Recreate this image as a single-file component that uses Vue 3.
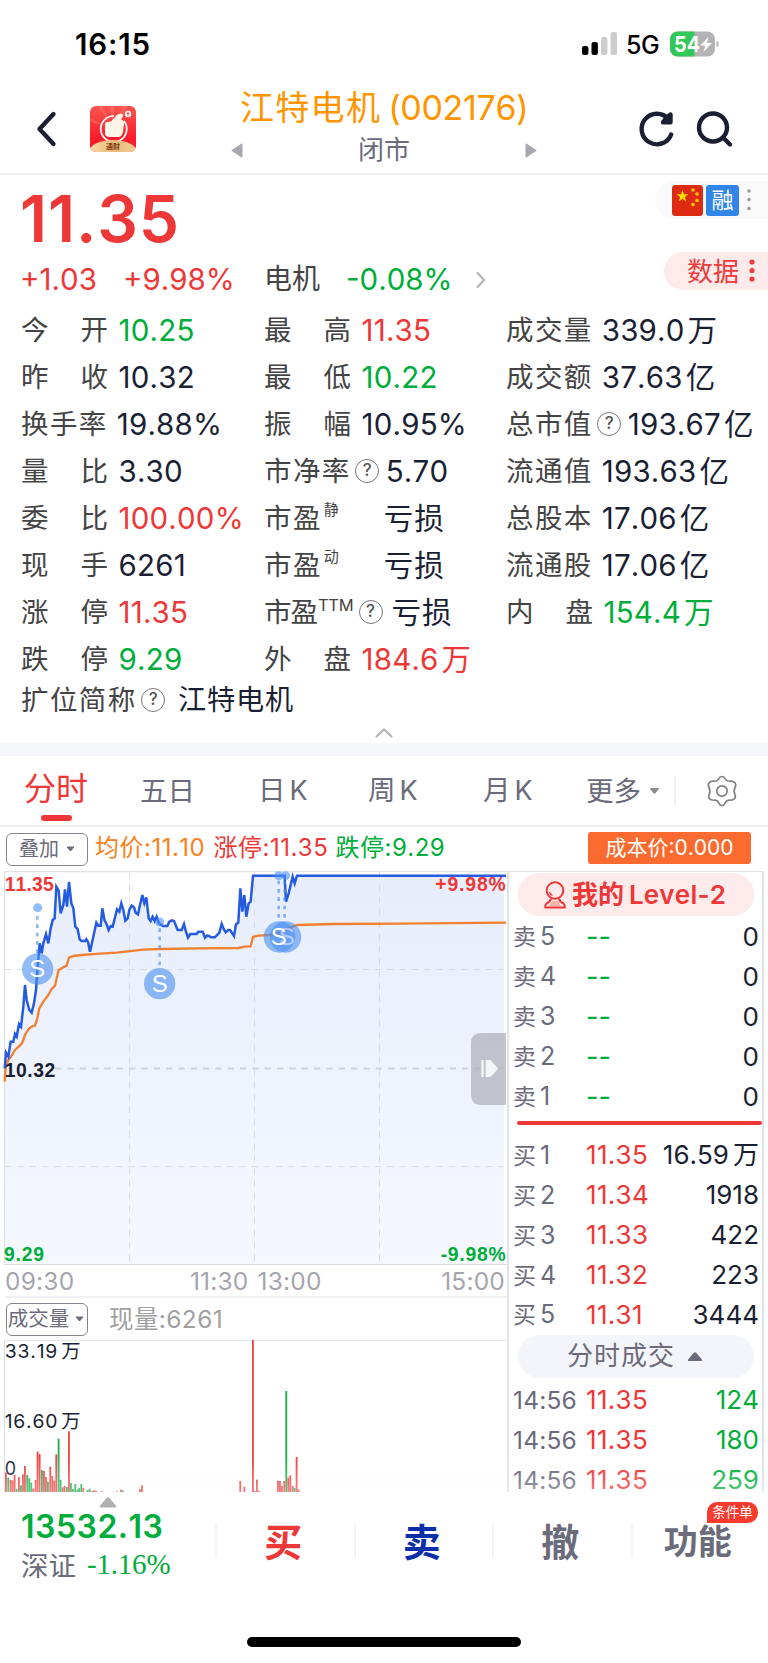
<script setup>
const cols = [
  [
    { l: '今开', v: '10.25', c: 'green' },
    { l: '昨收', v: '10.32' },
    { l: '换手率', v: '19.88%' },
    { l: '量比', v: '3.30' },
    { l: '委比', v: '100.00%', c: 'red' },
    { l: '现手', v: '6261' },
    { l: '涨停', v: '11.35', c: 'red' },
    { l: '跌停', v: '9.29', c: 'green' }
  ],
  [
    { l: '最高', v: '11.35', c: 'red' },
    { l: '最低', v: '10.22', c: 'green' },
    { l: '振幅', v: '10.95%' },
    { l: '市净率', help: true, v: '5.70' },
    { l: '市盈', sup: '静', v: '', u: '亏损' },
    { l: '市盈', sup: '动', v: '', u: '亏损' },
    { l: '市盈', sup: 'TTM', help: true, v: '', u: '亏损' },
    { l: '外盘', v: '184.6', u: '万', c: 'red' }
  ],
  [
    { l: '成交量', v: '339.0', u: '万' },
    { l: '成交额', v: '37.63', u: '亿' },
    { l: '总市值', help: true, v: '193.67', u: '亿' },
    { l: '流通值', v: '193.63', u: '亿' },
    { l: '总股本', v: '17.06', u: '亿' },
    { l: '流通股', v: '17.06', u: '亿' },
    { l: '内盘', v: '154.4', u: '万', c: 'green' }
  ]
]
const sells = [5, 4, 3, 2, 1]
const buys = [
  { n: 1, p: '11.35', v: '16.59', u: '万' },
  { n: 2, p: '11.34', v: '1918' },
  { n: 3, p: '11.33', v: '422' },
  { n: 4, p: '11.32', v: '223' },
  { n: 5, p: '11.31', v: '3444' }
]
const trades = ['124', '180', '259']

const price =
  '14,625 18,578 25,590 32,545 40,545 45,522 50,530 57,492 63,500 70,440 75,375 80,420 88,450 95,458 102,430 108,390 113,320 119,250 125,280 130,250 138,222 145,250 152,205 158,180 164,175 169,80 176,92 182,160 190,135 195,88 201,140 207,66 214,130 220,145 226,200 233,207 239,238 245,243 256,243 259,238 264,245 270,275 280,230 289,188 295,197 302,197 307,145 314,183 319,190 326,210 332,198 338,200 351,148 358,155 364,130 370,150 376,182 383,175 388,150 395,137 402,142 407,158 414,163 420,135 427,105 433,130 439,112 446,175 452,183 458,170 464,183 470,170 477,190 489,198 502,198 508,185 516,181 522,183 533,210 545,210 552,192 557,212 564,233 571,222 590,222 595,215 608,215 615,233 621,227 627,228 633,232 645,232 658,218 665,192 671,207 677,217 684,210 690,210 702,228 708,193 715,188 721,85 727,155 733,105 739,170 746,130 752,125 759,47 854,47 858,125 866,100 878,50 884,70 891,47 1518,47'
const average =
  '14,665 17,620 25,600 36,585 45,570 56,560 66,550 75,525 85,508 95,500 105,497 112,475 118,445 130,425 145,405 155,387 165,377 170,355 176,330 188,323 200,317 207,293 220,288 245,285 300,281 350,278 430,269 480,267 600,265 715,264 735,260 752,259 759,231 775,227 810,225 850,215 866,205 890,195 1000,192 1200,191 1518,188'

// [x, height, direction]
const bars = [
  [18, 58, 1], [25, 43, 0], [32, 36, 1], [38, 35, 1], [44, 51, 1], [50, 9, 0], [57, 45, 1], [63, 20, 0],
  [69, 53, 1], [75, 78, 1], [82, 51, 0], [88, 41, 0], [94, 28, 0], [100, 11, 1], [107, 36, 1], [113, 121, 1],
  [119, 114, 1], [126, 66, 0], [132, 63, 1], [138, 45, 1], [144, 31, 0], [151, 76, 1], [157, 48, 1], [163, 34, 1],
  [169, 113, 1], [176, 160, 0], [182, 37, 0], [188, 14, 1], [194, 18, 1], [201, 15, 0], [207, 182, 1], [213, 27, 0],
  [219, 9, 0], [226, 24, 0], [232, 7, 0], [238, 12, 0], [244, 24, 0], [250, 12, 1], [263, 6, 0], [269, 10, 0],
  [276, 3, 1], [282, 5, 1], [288, 4, 1], [307, 3, 1], [351, 2, 1], [363, 7, 1], [369, 5, 0], [420, 9, 1],
  [426, 20, 1], [721, 33, 1], [733, 16, 1], [759, 456, 1], [765, 3, 1], [771, 37, 1], [777, 3, 1], [834, 34, 1],
  [840, 33, 1], [846, 18, 1], [853, 33, 1], [859, 303, 0], [865, 43, 1], [871, 50, 1], [878, 18, 1], [884, 12, 0],
  [890, 105, 1], [896, 8, 1]
]
</script>

<template>
  <div class="screen">
    <div class="status">
      <span class="time">16:15</span>
      <svg class="sig" width="35" height="23" viewBox="0 0 35 23">
        <rect x="0" y="14" width="6.4" height="9" rx="2" />
        <rect x="9.5" y="10" width="6.4" height="13" rx="2" />
        <rect x="19" y="5" width="6.4" height="18" rx="2" fill="#ccc" />
        <rect x="28.6" y="0" width="6.4" height="23" rx="2" fill="#ccc" />
      </svg>
      <span class="net">5G</span>
      <svg width="50" height="26" viewBox="0 0 50 26">
        <defs><clipPath id="bat"><rect x="0" y=".5" width="45" height="25" rx="7.5" /></clipPath></defs>
        <g clip-path="url(#bat)">
          <rect width="45" height="26" fill="#b3b3b5" />
          <rect width="24.5" height="26" fill="#34c759" />
        </g>
        <path d="M46.5 9.5q2.3.8 2.3 3.5t-2.3 3.5z" fill="#b3b3b5" />
        <text x="4" y="20.800" class="batt" textLength="26" lengthAdjust="spacingAndGlyphs">54</text>
        <path d="M39 4.5 29.5 15h5.3l-2.5 7.5L43 11.5h-5.4z" fill="#fff" stroke="#b3b3b5" stroke-width="1" />
      </svg>
    </div>

    <header class="head">
      <svg class="back" width="22" height="38" viewBox="0 0 22 38"><path d="M17.5 4 3.5 19 17.5 34" class="ink" /></svg>
      <svg class="logo" width="46" height="46" viewBox="0 0 46 46">
        <defs>
          <linearGradient id="lg" x1="0" y1="0" x2="0" y2="1"><stop offset="0" stop-color="#fb5550" /><stop offset=".7" stop-color="#fb1c2b" /></linearGradient>
          <linearGradient id="gold" x1="0" y1="0" x2="1" y2="0"><stop offset="0" stop-color="#fbdca6" /><stop offset=".5" stop-color="#e9b978" /><stop offset="1" stop-color="#f6cf94" /></linearGradient>
          <clipPath id="lc"><rect width="46" height="46" rx="6" /></clipPath>
        </defs>
        <g clip-path="url(#lc)">
          <rect width="46" height="46" fill="url(#lg)" />
          <path d="M23 22 8 0h4zM23 22 20 0h4zM23 22 0 12v4zM23 22 33 0h4z" fill="#fff" opacity=".12" />
          <path d="M24 10A13 13 0 1 0 34 15" fill="none" stroke="#fff" stroke-width="1.7" />
          <path d="M15 18q0-2 2-2l4-.5 4.500-5q2-3.500 7-2.500 1.500.5.5 2l-2 3.500q3 .5 3 3.500l-1 9q-1 5-5 5h-8.500q-4.500 0-4.500-4z" fill="#fff4e8" />
          <circle cx="38" cy="8" r="3.2" fill="#fff" /><path d="M38 6v4M36.500 7.500h3" stroke="#fb3b3b" stroke-width=".9" />
          <ellipse cx="23" cy="46" rx="24" ry="12" fill="url(#gold)" />
          <text x="16" y="43" font-size="7" font-weight="700" fill="#7c3a10" textLength="14">通财</text>
        </g>
      </svg>
      <div class="title">
        <div class="t1"><span class="tcn">江特电机</span><span class="tnum">(002176)</span></div>
        <div class="t2">
          <svg width="12" height="15" viewBox="0 0 12 15"><path d="M11 .8v13.400L.8 7.500z" class="tri" /></svg>
          <span>闭市</span>
          <svg width="12" height="15" viewBox="0 0 12 15"><path d="M1 .8v13.400L11.200 7.500z" class="tri" /></svg>
        </div>
      </div>
      <svg class="ref" width="36" height="38" viewBox="0 0 36 38">
        <path d="M32.200 24.500A15.300 15.300 0 1 1 29.500 9" class="ink" />
        <path d="M31.500 4.500v7.700h-7.500l3-4z" class="ink arrow" />
      </svg>
      <svg class="srch" width="36" height="38" viewBox="0 0 36 38">
        <circle cx="17" cy="17.500" r="14" class="ink" /><path d="M27.500 28 34 34.500" class="ink" />
      </svg>
    </header>

    <section class="quote">
      <div class="qrow">
        <div class="big">11.35</div>
        <div class="tags">
          <svg width="31" height="31" viewBox="0 0 31 31">
            <rect width="31" height="31" rx="3.500" fill="#de2a10" />
            <path d="M10.500 5l1.500 4.300h4.400l-3.500 2.700 1.300 4.400-3.700-2.600-3.700 2.600 1.300-4.400L4.600 9.300H9z" fill="#ffde00" />
            <g fill="#ffc800"><circle cx="21" cy="5" r="1.800" /><circle cx="25" cy="9" r="1.800" /><circle cx="25" cy="15.500" r="1.800" /><circle cx="21" cy="19.500" r="1.800" /></g>
          </svg>
          <span class="rong">融</span>
          <svg width="4" height="22" viewBox="0 0 4 22"><g fill="#999"><circle cx="2" cy="2" r="1.700" /><circle cx="2" cy="10.500" r="1.700" /><circle cx="2" cy="19.500" r="1.700" /></g></svg>
        </div>
      </div>
      <div class="chg">
        <span class="red c1">+1.03</span><span class="red c2">+9.98%</span>
        <span class="c3">电机</span><span class="green c4">-0.08%</span>
        <svg width="10" height="18" viewBox="0 0 10 18"><path d="M1.500 2 8 9l-6.500 7" class="chev" /></svg>
        <div class="data"><span>数据</span>
          <svg width="6" height="24" viewBox="0 0 6 24"><g fill="#ee3b3b"><circle cx="3" cy="3" r="2.600" /><circle cx="3" cy="11.500" r="2.600" /><circle cx="3" cy="20" r="2.600" /></g></svg>
        </div>
      </div>
      <div class="grid">
        <div v-for="(col, i) in cols" :key="i" class="col">
          <div v-for="(r, j) in col" :key="j" class="cell">
            <span class="lab" :class="{ wide: r.l.length === 2 && !r.sup, supl: r.sup, ttm: r.sup === 'TTM' }">
              <span v-for="ch in r.l" :key="ch">{{ ch }}</span>
            </span>
            <sup v-if="r.sup" :class="{ ttm: r.sup === 'TTM' }">{{ r.sup }}</sup>
            <i v-if="r.help" class="help">?</i>
            <span class="val" :class="[r.c, { afterhelp: r.help, aftersup: r.sup && !r.help }]">{{ r.v }}<b v-if="r.u" :class="{ solo: !r.v }">{{ r.u }}</b></span>
          </div>
        </div>
      </div>
      <div class="ext"><span class="lab">扩位简称</span><i class="help">?</i><span class="extv">江特电机</span></div>
      <div class="fold"><svg width="18" height="11" viewBox="0 0 18 11"><path d="M1.500 9.500 9 2.500l7.500 7" class="chev" /></svg></div>
    </section>

    <div class="band"></div>

    <nav class="tabs">
      <span class="tab on">分时</span>
      <span class="tab wd">五日</span>
      <span class="tab">日<em>K</em></span>
      <span class="tab">周<em>K</em></span>
      <span class="tab">月<em>K</em></span>
      <span class="tab more wd">更多</span>
      <svg class="caret" width="11" height="8" viewBox="0 0 11 8"><path d="M2 1h7q1.500 0 .6 1.200L6.400 6.300q-.9 1-1.800 0L1.400 2.200Q.5 1 2 1" fill="#8c8c8c" /></svg>
      <i class="vline"></i>
      <svg class="gear" width="32" height="32" viewBox="0 0 32 32" fill="none" stroke="#808080" stroke-width="1.700">
        <path d="M16 1.500q2.300 0 3.300 2.300 1.500 2.700 4.700 2.400 3.300-.4 4.900 1.500 1.600 2.400.2 4.400-1.900 3.900-.2 7.400 1.200 2.500-.6 4.300-1.400 1.700-4.300 1.400-3.200-.3-4.700 2.600Q18 30.500 16 30.500t-3.300-2.700q-1.500-2.900-4.700-2.600-2.900.3-4.300-1.400-1.800-1.800-.6-4.300 1.700-3.500-.2-7.400-1.400-2 .2-4.400Q4.700 5.800 8 6.200q3.200.3 4.700-2.400 1-2.300 3.300-2.300z" stroke-linejoin="round" />
        <circle cx="16" cy="16" r="5.200" />
      </svg>
    </nav>

    <div class="info">
      <span class="box">叠加<svg width="9" height="7" viewBox="0 0 9 7"><path d="M1 1h7L4.500 5z" fill="#6b6b7b" stroke="#6b6b7b" stroke-linejoin="round" /></svg></span>
      <span class="it orange">均价:11.10</span><span class="it red">涨停:11.35</span><span class="it green">跌停:9.29</span>
      <span class="cost">成本价:0.000</span>
    </div>

    <main class="body">
      <div class="left">
        <svg class="chart" width="508" height="394" viewBox="0 33 1524 1182">
          <defs><linearGradient id="area" x1="0" y1="0" x2="0" y2="1"><stop offset="0" stop-color="#e7edfb" /><stop offset="1" stop-color="#f5f8ff" /></linearGradient></defs>
          <polygon :points="price.replace('1518,47', '1512,47') + ' 1512,1212 14,1212'" fill="url(#area)" />
          <g stroke="#d3d8e0" stroke-width="2.600" stroke-dasharray="20 17">
            <path d="M388.500 36V1212M763.500 36V1212M1138.500 36V1212M14 328.500H1510M14 920H1510" fill="none" />
          </g>
          <path d="M165 625.500H1510" stroke="#cdd3dc" stroke-width="6" stroke-dasharray="19 18" />
          <path d="M13.500 1215V35H1521M13.500 1213.500H1521" fill="none" stroke="#d8dee3" stroke-width="3" />
          <polyline :points="average" fill="none" stroke="#f28030" stroke-width="7" stroke-linejoin="round" />
          <polyline :points="price" fill="none" stroke="#245be0" stroke-width="7.500" stroke-linejoin="miter" />
          <g stroke="#4a90ee" stroke-opacity=".62" stroke-width="8" stroke-dasharray="11 14">
            <path d="M112 168V280M479 205V325M836 62V185M854 62V185" />
          </g>
          <g fill="#4a90f2" fill-opacity=".6">
            <circle cx="113" cy="143" r="13.500" /><circle cx="479" cy="186" r="13.500" /><circle cx="836" cy="47" r="13.500" /><circle cx="857" cy="47" r="13.500" />
            <circle cx="113" cy="327" r="47" /><circle cx="479" cy="371" r="47" /><circle cx="838" cy="231" r="47" /><circle cx="857" cy="231" r="47" />
          </g>
          <g class="mark"><text x="112" y="352">S</text><text x="479" y="397">S</text><text x="860" y="256" opacity=".5">S</text><text x="836" y="256">S</text></g>
          <g class="lim">
            <text x="14" y="93" fill="#ee3737" textLength="147">11.35</text>
            <text x="14" y="651" fill="#1b1f33" textLength="152">10.32</text>
            <text x="12" y="1204" fill="#00ad3a" textLength="120">9.29</text>
            <text x="1306" y="93" fill="#ee3737" textLength="211">+9.98%</text>
            <text x="1322" y="1204" fill="#00ad3a" textLength="195">-9.98%</text>
          </g>
          <path d="M1518 519h-75q-30 0-30 30v156q0 30 30 30h75z" fill="#aeb0b8" fill-opacity=".72" />
          <path d="M1444 600h7v51h-7zM1457 600h14l20 22q5 4 0 8l-20 21h-14z" fill="#f4f5f8" />
        </svg>
        <div class="axis"><span>09:30</span><span class="mid">11:30<i></i>13:00</span><span>15:00</span></div>
        <div class="volh"><span class="box vb">成交量<svg width="9" height="7" viewBox="0 0 9 7"><path d="M1 1h7L4.500 5z" fill="#6b6b7b" stroke="#6b6b7b" stroke-linejoin="round" /></svg></span><span class="now">现量:6261</span></div>
        <svg class="vol" width="508" height="152" viewBox="0 297 1524 456">
          <path d="M13.500 297V753" stroke="#d8dee3" stroke-width="3" />
          <path d="M13 298.500H1518" stroke="#e4e7ea" stroke-width="3" />
          <rect v-for="(b, k) in bars" :key="k" :x="b[0] - 3" :y="753 - b[1]" width="5.600" :height="b[1]" :fill="b[2] ? '#ee4646' : '#1cb04c'" />
          <g class="vt">
            <text x="14" y="351" textLength="158">33.19</text><text x="184" y="351" font-size="58">万</text>
            <text x="14" y="561" textLength="158">16.60</text><text x="184" y="561" font-size="58">万</text>
            <text x="14" y="702" textLength="34" lengthAdjust="spacingAndGlyphs">0</text>
          </g>
        </svg>
      </div>

      <div class="right">
        <div class="lv">
          <svg width="22" height="28" viewBox="0 0 22 28" fill="none" stroke="#ee3737" stroke-width="2"><circle cx="11" cy="9.500" r="8.300" /><path d="M7 17.500q-.5 3-4.500 5-1.300 1-1.300 4h19.600q0-3-1.300-4-4-2-4.500-5" stroke-linejoin="round" /><path d="M8 20h6l3 5H5z" fill="#f8b5a5" stroke="none" /><path d="M5.500 11q.7 2.500 3 3.500" stroke-width="1.300" /></svg>
          <span>我的<u>Level-2</u></span>
        </div>
        <div class="book">
          <div v-for="n in sells" :key="n" class="ln"><span class="bl">卖<em>{{ n }}</em></span><span class="bp green dash">--</span><span class="bv">0</span></div>
        </div>
        <div class="bar"></div>
        <div class="book">
          <div v-for="b in buys" :key="b.n" class="ln"><span class="bl">买<em>{{ b.n }}</em></span><span class="bp red">{{ b.p }}</span><span class="bv">{{ b.v }}<b v-if="b.u">{{ b.u }}</b></span></div>
        </div>
        <div class="deal">分时成交<svg width="16" height="11" viewBox="0 0 16 11"><path d="M2 10Q0 10 1.500 8L6.600 2Q8 .4 9.400 2l5.100 6Q16 10 14 10z" fill="#6b6b7b" /></svg></div>
        <div class="book last">
          <div v-for="t in trades" :key="t" class="ln"><span class="bl tm">14:56</span><span class="bp red">11.35</span><span class="bv green">{{ t }}</span></div>
        </div>
      </div>
      <div class="fade"></div>
    </main>

    <footer class="foot">
      <div class="idx">
        <svg width="18" height="12" viewBox="0 0 18 12"><path d="M1.500 11.500Q0 11 1.500 9L7.500 2Q9 .5 10.500 2l6 7q1.500 2 0 2.500z" fill="#b0b0b0" /></svg>
        <div class="iv">13532.13</div>
        <div class="in"><span>深证</span><span class="ip">-1.16%</span></div>
      </div>
      <div class="act buy">买</div>
      <div class="act sell">卖</div>
      <div class="act">撤</div>
      <div class="act fn">功能<span class="badge">条件单</span></div>
    </footer>
    <div class="home"></div>
  </div>
</template>

<style>
html, body { margin: 0; background: #fff; }
</style>

<style scoped>
.screen { width: 768px; height: 1663px; overflow: hidden; background: #fff; font-family: Inter, "Noto Sans CJK SC", sans-serif; font-kerning: none; color: #1b1f33; }
svg { display: block; flex: none; overflow: visible; }
i, em { font-style: normal; }
u { text-decoration: none; }
b { font-weight: inherit; }
.red { color: #ee3737; }
.green { color: #00ad3a; }
.orange { color: #fb8020; }
.ink { fill: none; stroke: #1b1f33; stroke-width: 4.4; stroke-linecap: round; stroke-linejoin: round; }
.ink.arrow { fill: #1b1f33; }
.tri { fill: #a8a9b0; stroke: #a8a9b0; stroke-linejoin: round; }
.chev { fill: none; stroke: #b5b5b5; stroke-width: 2.2; stroke-linecap: round; }

.status { height: 88px; display: flex; box-sizing: border-box; padding: 0 48px 0 75px; align-items: center; color: #000; }
.time { font-size: 29.5px; font-weight: 600; flex: 1; line-height: 30px; letter-spacing: 0.8px; }
.sig { margin-top: -1px; }
.net { font-size: 25px; font-weight: 500; margin: 2px 10px 0 9px; width: 34px; letter-spacing: -0.5px; }
.batt { font-family: Inter, sans-serif; font-size: 22px; font-weight: 700; fill: #fff; }

.head { height: 87px; border-bottom: 2px solid #f2f2f3; display: flex; box-sizing: border-box; padding-left: 36px; }
.back { margin-top: 22px; }
.logo { margin: 18px 0 0 32px; }
.title { width: 320px; margin-left: 87px; }
.t1 { height: 40px; line-height: 40px; color: #ff9500; display: flex; padding-left: 17px; }
.tcn { font-size: 34px; letter-spacing: 1.3px; }
.tnum { font-size: 34px; margin-left: 7px; white-space: nowrap; letter-spacing: -0.3px; }
.t2 { display: flex; align-items: center; justify-content: space-between; height: 44px; font-size: 26px; color: #6b6b7b; padding: 0 6px 0 8px; line-height: 40px; }
.t2 span { margin-top: 0; }
.ref { margin: 22px 0 0 96px; }
.srch { margin: 22px 0 0 21px; }

.quote { height: 568px; }
.qrow { display: flex; height: 72px; justify-content: space-between; }
.big { font-size: 64px; font-weight: 600; line-height: 88px; color: #ee3737; padding-left: 20px; letter-spacing: 0.9px; }
.tags { width: 113px; height: 38px; margin-top: 6px; border-radius: 19px 0 0 19px; background: #f9f9fa; display: flex; align-items: center; padding-left: 17px; box-sizing: border-box; }
.rong { width: 33px; height: 31px; line-height: 30px; background: #3285e8; color: #fff; font-size: 22px; border-radius: 3px; text-align: center; margin: 0 8px 0 3px; }
.chg { display: flex; height: 66px; align-items: center; font-size: 29.5px; padding-left: 20px; line-height: 34px; }
.chg > span { margin-top: -2px; }
.c1 { width: 103px; }
.c2 { width: 141px; }
.c3 { width: 82px; font-size: 28px; color: #444; }
.c4 { width: 130px; }
.data { margin-left: auto; width: 104px; height: 38px; border-radius: 19px 0 0 19px; background: #fdeaea; color: #ee3b3b; font-size: 26px; display: flex; align-items: center; box-sizing: border-box; padding-left: 23px; gap: 10px; margin-top: -18px; }
.data span { padding-top: 1px; }

.grid { display: grid; grid-template-columns: 243px 242px 262px; padding-left: 21px; margin-top: -7px; }
.cell { height: 47.1px; display: flex; align-items: center; white-space: nowrap; }
.lab { font-size: 27.5px; color: #444; letter-spacing: 1.4px; line-height: 36px; flex: none; }
.wide { width: 87px; display: flex; justify-content: space-between; letter-spacing: 0; }
.lab + .val { margin-left: 9px; }
.wide + .val { margin-left: 10.5px; }
.lab.ttm { letter-spacing: -1px; }
.supl + sup { font-size: 15px; line-height: 16px; color: #444; align-self: flex-start; margin: 8px 0 0 2px; width: 17px; }
.supl + sup.ttm { font-size: 16.500px; letter-spacing: -0.3px; width: 36px; margin-left: 1px; }
.help { box-sizing: border-box; width: 24px; height: 24px; border: 1.4px solid #777; border-radius: 50%; font-size: 17px; line-height: 21px; text-align: center; color: #555; flex: none; margin-left: 4.5px; font-weight: 500; }
.val { font-size: 29.5px; line-height: 36px; letter-spacing: 0.2px; }
.val b { font-size: 29.5px; margin-left: 3px; }
.val b.solo { margin-left: 0; letter-spacing: 1px; }
.afterhelp { margin-left: 6.5px; }
sup.ttm ~ .afterhelp { margin-left: 9px; }
.val.aftersup { margin-left: 43px; }
.ext { height: 34px; display: flex; align-items: center; padding-left: 21px; margin-top: 0; }
.extv { font-size: 28.2px; margin-left: 13px; letter-spacing: 0.8px; line-height: 34px; }
.fold { display: flex; justify-content: center; margin-top: 10px; }

.band { height: 13px; background: #f4f6fa; }
.tabs { height: 71px; border-bottom: 2px solid #eeeeef; box-sizing: border-box; display: flex; align-items: center; color: #6b6b7b; font-size: 27.5px; padding-left: 25px; position: relative; }
.tab { line-height: 36px; white-space: nowrap; }
.tab em { margin-left: 4px; font-size: 27px; }
.on { color: #ee3737; font-size: 32px; width: 115px; height: 69px; line-height: 66px; position: relative; text-indent: -1px; }
.on::after { content: ""; position: absolute; left: 16px; bottom: 4px; width: 31px; height: 6px; border-radius: 3px; background: #ee3737; }
.tab.wd { width: 118px; }
.tab.wd + .tab { width: 110px; }
.tab:nth-child(4) { width: 115px; }
.tab:nth-child(5) { width: 103px; }
.tab.more { width: 63px; }
.vline { width: 2px; height: 29px; background: #eee; margin: 0 30px 0 14px; }

.info { height: 44px; display: flex; align-items: center; padding: 0 0 0 6px; white-space: nowrap; font-size: 24px; line-height: 32px; }
.box { width: 82px; height: 33px; box-sizing: border-box; border: 1.6px solid #858592; border-radius: 6px; font-size: 20px; color: #6b6b7b; display: flex; align-items: center; justify-content: center; gap: 7px; line-height: 30px; }
.info .box { margin-right: 7px; }
.it { width: 118.500px; margin-top: -2px; letter-spacing: 0.5px; }
.it + .it { width: 122px; }
.it + .it + .it { width: auto; }
.cost { margin: -3px 17px 0 auto; width: 163px; height: 32px; line-height: 32px; border-radius: 3px; background: #fb6a2e; color: #fff; text-align: center; font-size: 21px; }

.body { height: 621px; display: flex; position: relative; overflow: hidden; }
.left { width: 507px; flex: none; }
.axis { height: 33px; border-bottom: 2px solid #f0f0f2; margin-left: 5px; display: flex; justify-content: space-between; line-height: 32px; font-size: 24.5px; letter-spacing: 0.2px; color: #a5a5ad; padding-right: 2px; box-sizing: border-box; }
.mid { margin-left: -4px; }
.mid i { display: inline-block; width: 9px; }
.volh { height: 42px; display: flex; align-items: center; padding-left: 6px; }
.vb { gap: 6px; padding-right: 2px; font-size: 20.5px; }
.now { font-size: 24.5px; color: #a0a0a0; margin-left: 21px; letter-spacing: 0.4px; line-height: 32px; margin-top: 0; }
.chart text { font-family: "Liberation Sans", Arial, sans-serif; }
.lim { font-weight: 700; font-size: 58px; }
.mark { fill: #fff; font-size: 72px; text-anchor: middle; }
.vt { font-size: 58px; fill: #1b1f33; font-family: Inter, "Noto Sans CJK SC", sans-serif; }

.right { width: 257px; box-sizing: border-box; border: 2px solid #dfe3e6; border-top-width: 1px; border-bottom: 0; padding: 0 0 0 3px; }
.lv { width: 236px; height: 43px; margin: 1px 0 1px 6px; border-radius: 22px; background: #fdeaea; color: #ee3737; display: flex; align-items: center; justify-content: center; gap: 6px; font-size: 26px; font-weight: 700; line-height: 40px; padding-right: 2px; box-sizing: border-box; }
.lv span { margin-top: 1px; }
.lv u { margin-left: 5px; font-weight: 600; letter-spacing: 0.2px; }
.ln { height: 39.9px; display: flex; align-items: center; font-size: 26px; line-height: 36px; }
.bl { width: 73px; color: #6b6b7b; font-size: 23px; margin-left: 1px; }
.bl em { font-size: 25px; margin-left: 4px; }
.bl.tm { font-size: 24.5px; white-space: nowrap; letter-spacing: 0.2px; }
.bp { letter-spacing: 0.3px; }
.last .ln { line-height: 28px; }
.dash { letter-spacing: 0; font-size: 27px; }
.bv { margin-left: auto; padding-right: 3px; }
.bv b { font-size: 26px; margin-left: 4px; }
.bar { width: 245px; height: 4px; border-radius: 2px; background: #ee3737; margin: 5px 0 10px 5px; }
.deal { width: 236px; height: 43px; margin: 0 0 2px 6px; border-radius: 22px; background: #f4f5fa; display: flex; align-items: center; justify-content: center; gap: 12px; font-size: 26px; letter-spacing: 1px; color: #6b6b7b; line-height: 40px; padding-right: 2px; box-sizing: border-box; }
.fade { position: absolute; left: 0; right: 0; bottom: 0; height: 34px; background: linear-gradient(rgba(252, 252, 254, 0), rgba(252, 252, 254, 0.3)); }

.foot { height: 130px; background: #fff; display: flex; }
.idx { width: 214px; padding-left: 21px; box-sizing: border-box; }
.idx > svg { margin: 4px 0 0 78px; }
.iv { font-size: 32px; font-weight: 600; line-height: 36px; margin-top: 1px; color: #00ad3a; letter-spacing: 0.5px; }
.in { display: flex; align-items: center; font-size: 27.5px; color: #6b6b7b; line-height: 40px; margin-top: 1px; }
.ip { font-family: "Liberation Serif", serif; font-size: 29px; letter-spacing: -0.2px; color: #00ad3a; margin-left: 11px; margin-top: -4px; }
.act { flex: 1; height: 98px; line-height: 100px; text-align: center; font-size: 38px; font-weight: 700; color: #6b6b7b; position: relative; }
.act::before { content: ""; position: absolute; left: 1px; top: 33px; width: 2px; height: 33px; background: #f3f3f8; }
.buy { color: #ee3737; }
.sell { color: #0a2fa8; }
.fn { font-size: 34px; font-weight: 600; text-indent: -2px; }
.badge { position: absolute; right: 10px; top: 10px; width: 51px; height: 21px; line-height: 21px; border-radius: 10px 10px 10px 0; background: #fb3a2e; color: #fff; font-size: 13.5px; font-weight: 400; text-indent: 0; }
.home { width: 274px; height: 10px; border-radius: 5px; background: #000; margin: 15px auto 0; }
</style>
